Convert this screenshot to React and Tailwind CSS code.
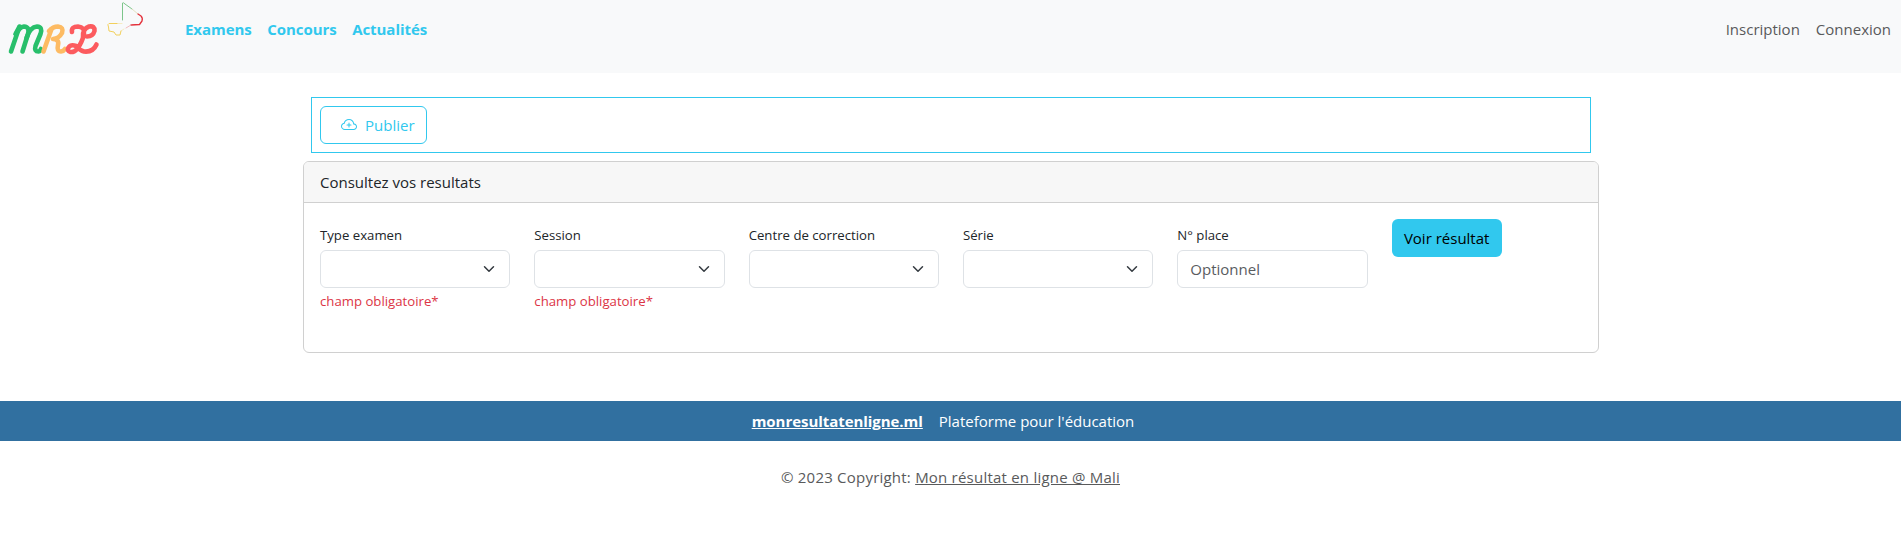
import { BsCloudPlus } from "react-icons/bs";

function Logo() {
  return (
    <svg width="150" height="60" viewBox="0 0 150 60" fill="none" strokeLinecap="round" strokeLinejoin="round" aria-hidden="true">
      <g strokeWidth="4.6">
        <g stroke="#28bf6b">
          <path d="M11 51.500L19.500 26.500L15.500 34" />
          <path d="M16 34Q19.500 27 24 26.500Q30 27 28 34L22.500 51.500" />
          <path d="M26.500 38Q30 27 37 26.500Q43 27 40.500 34L35.500 46Q34 51.500 38.500 51.500Q40 51.300 41 49" />
        </g>
        <g stroke="#fdbb63">
          <path d="M43.500 51.500L51.500 29" />
          <path d="M49 31Q53 26.500 58 26.500Q64 27 62 33Q59 38.500 53 39Q59.500 39.500 58 45Q56.500 51.500 61 51.500Q63.500 51.300 65 49" />
        </g>
        <path stroke="#fc5b5e" d="M72 32Q71 26.500 78 26.500Q85 27 84 34Q82 43 77 49Q74 52.500 70.500 52Q66.500 51 68.500 47.500Q71 44 76 46Q80 50.500 84 51.500Q93 52.500 96.500 44.500M83 38Q82 29 89 26.500Q95 25.500 94.500 31Q93 36.500 87 36.500" />
      </g>
      <g strokeWidth="1">
        <path stroke="#7cc58a" d="M122.500 20V3Q123 2 125 4L132 9" />
        <path stroke="#d7d9a8" strokeOpacity="0.7" d="M132 9L138 14" />
        <path stroke="#e3313b" strokeWidth="1.300" d="M138 14L141 16Q143 18 142 21L139.500 24.500L131 25" />
        <path stroke="#eea0a4" strokeOpacity="0.7" d="M131 25L126 28" />
        <path stroke="#f2d05c" d="M117 23.500H109Q107 24 108.500 27L109 31L114 32L116 35H120L121 31" />
        <path stroke="#f2d05c" strokeOpacity="0.35" d="M117 23.500H122M121 31L124 29" />
      </g>
    </svg>
  );
}

function Select() {
  return (
    <div className="flex h-[38px] items-center justify-end rounded-md border border-[#dee2e6] bg-white pr-3">
      <svg className="h-3 w-4" viewBox="0 0 16 16" fill="none" stroke="#343a40" strokeWidth="2" strokeLinecap="round" strokeLinejoin="round" aria-hidden="true">
        <path d="m2 5 6 6 6-6" />
      </svg>
    </div>
  );
}

function Field({ label, required, children }) {
  return (
    <div className="px-3 pt-1.5">
      <div className="mb-1 h-[21px] text-[13.2px] leading-[21px]">{label}</div>
      {children}
      {required && <div className="mt-[3px] text-[13.2px] leading-[21px] text-[#dc3545]">champ obligatoire*</div>}
    </div>
  );
}

export default function App() {
  return (
    <div className="h-[538px] overflow-hidden bg-white font-['Open_Sans',sans-serif] text-[15px] leading-6 text-[#212529]">
      <nav className="flex h-[73px] items-start bg-[#f8f9fa]">
        <Logo />
        <div className="ml-[35px] flex gap-[15.5px] pt-[17px] font-bold tracking-[-0.05px] text-[#31c8ee]">
          <a>Examens</a>
          <a>Concours</a>
          <a>Actualités</a>
        </div>
        <div className="ml-auto flex gap-4 pt-[17px] pr-[10px] text-[#595a5b]">
          <a>Inscription</a>
          <a>Connexion</a>
        </div>
      </nav>

      <main className="ml-[291px] w-[1320px] px-3 pt-6">
        <div className="mx-2 h-14 border border-[#31c8ee] p-2">
          <button className="flex h-[38px] w-[107px] items-center rounded-md border border-[#31c8ee] pl-5 text-[#31c8ee]">
            <BsCloudPlus size={16} />
            <span className="ml-2">Publier</span>
          </button>
        </div>

        <section className="mt-2 h-[192px] overflow-hidden rounded-md border border-[#d0d0d0]">
          <h1 className="flex h-[41px] items-center border-b border-[#d0d0d0] bg-[#f7f7f7] px-4">
            <span>Consultez vos resultats</span>
          </h1>
          <div className="grid grid-cols-6 px-1 pt-4">
            <Field label="Type examen" required><Select /></Field>
            <Field label="Session" required><Select /></Field>
            <Field label="Centre de correction"><Select /></Field>
            <Field label="Série"><Select /></Field>
            <Field label="N° place">
              <input className="block h-[38px] w-full rounded-md border border-[#dee2e6] px-3 placeholder:text-[#595c5f]" placeholder="Optionnel" />
            </Field>
            <div className="px-3">
              <button className="h-[38px] w-[110px] rounded-md bg-[#31c8ee] text-black">Voir résultat</button>
            </div>
          </div>
        </section>
      </main>

      <footer className="mt-12">
        <div className="flex h-10 items-center justify-center gap-4 bg-[#3170a0] pr-[15px] text-white">
          <a className="font-bold tracking-[-0.05px] underline">monresultatenligne.ml</a>
          <span>Plateforme pour l'éducation</span>
        </div>
        <div className="pt-6 text-center tracking-[0.22px] text-[#595a5b]">
          © 2023 Copyright: <a className="underline">Mon résultat en ligne @ Mali</a>
        </div>
      </footer>
    </div>
  );
}
